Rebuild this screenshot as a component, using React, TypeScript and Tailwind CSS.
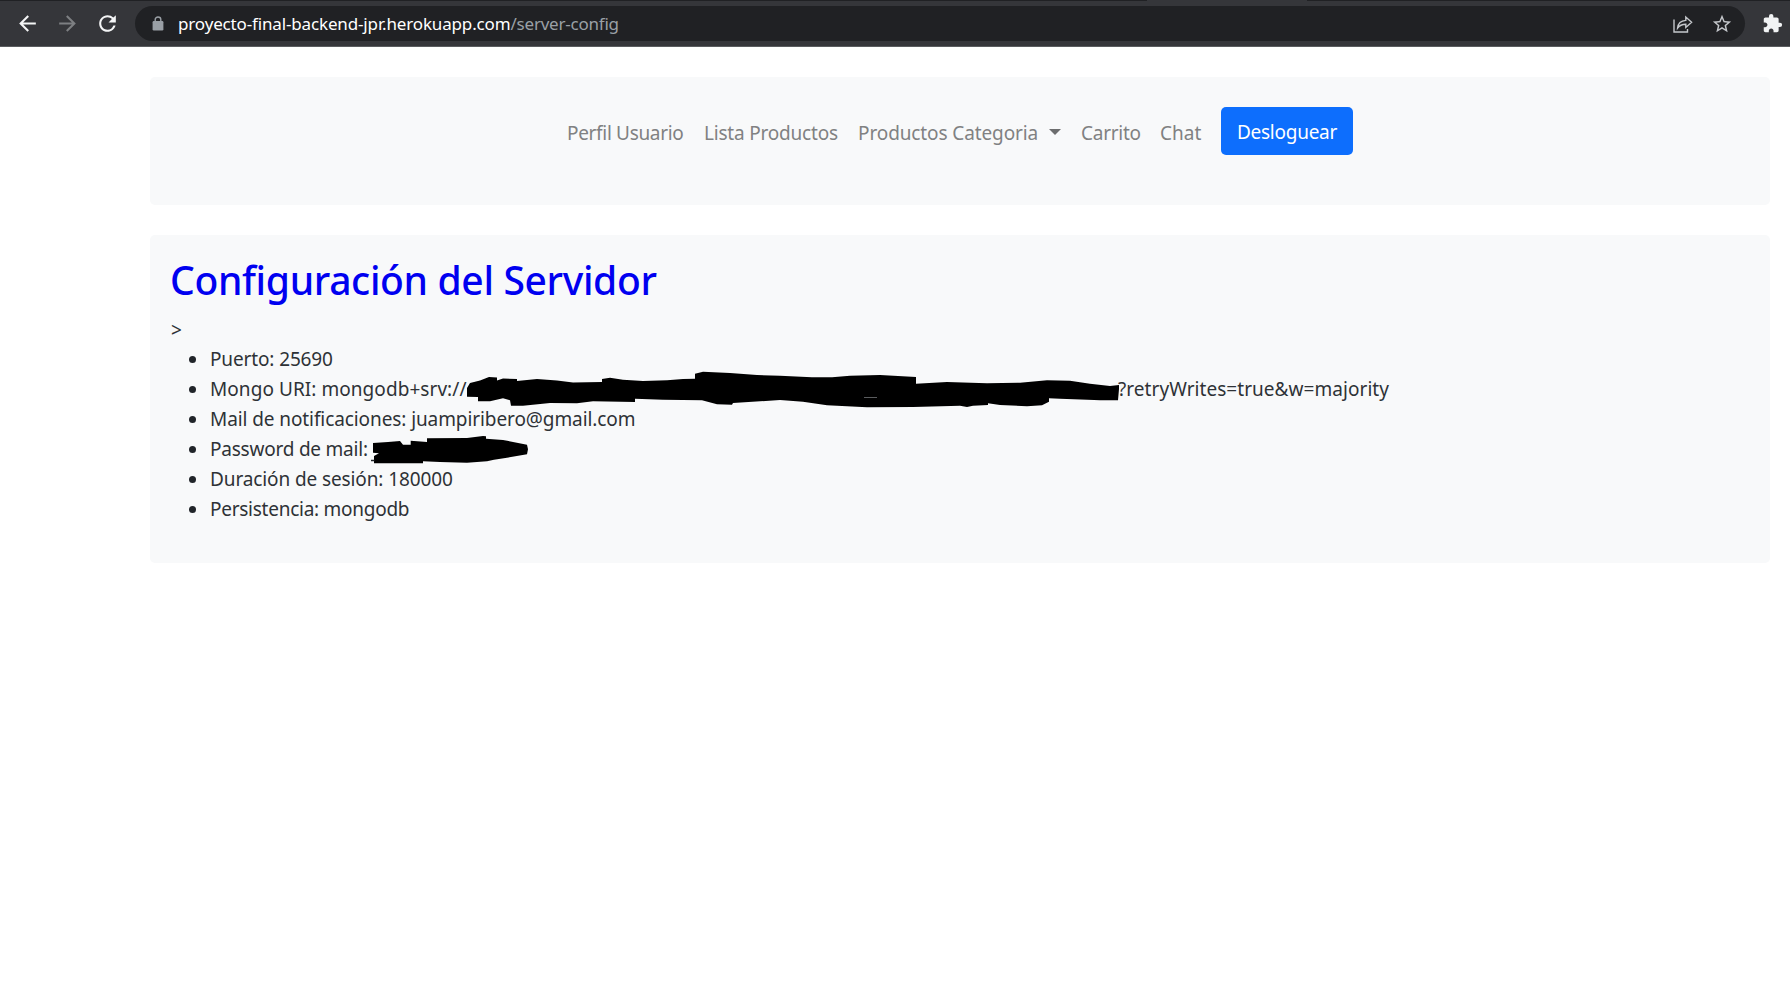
import React from "react";
import {
  MdArrowBack,
  MdArrowForward,
  MdRefresh,
  MdStarBorder,
  MdExtension,
} from "react-icons/md";

function LockIcon() {
  return (
    <svg width="12" height="15" viewBox="0 0 12 15" className="shrink-0">
      <path d="M3.2 6V3.6a2.8 2.6 0 0 1 5.6 0V6" fill="none" stroke="#9aa0a6" strokeWidth="1.4" />
      <rect x="0.6" y="5" width="10.8" height="9.5" rx="1.2" fill="#9aa0a6" />
    </svg>
  );
}

function ShareIcon() {
  return (
    <svg
      width="20"
      height="18"
      viewBox="0 0 20 18"
      fill="none"
      stroke="#c4c7cb"
      strokeWidth="1.4"
      className="shrink-0"
    >
      <path d="M1 4.5V17H14.5V14" />
      <path d="M4.6 13C5 8.8 7.6 5.8 12.8 5.4V2L18.6 7.2L12.8 12.4V9.2C9 9.2 6.4 10.4 4.6 13Z" />
    </svg>
  );
}

function BrowserBar() {
  return (
    <header className="flex h-[47px] flex-col border-b border-[#5a5c5f] bg-[#35363a]">
      <div className="flex h-px shrink-0 bg-[#202124] pl-[1147px]">
        <div className="w-[160px] bg-[#35363a]" />
      </div>
      <div className="flex flex-1 items-center pl-[15px]">
        <MdArrowBack size={25} className="shrink-0 text-[#f4f5f6]" />
        <MdArrowForward size={25} className="ml-[15px] shrink-0 text-[#7d7f82]" />
        <MdRefresh size={25} className="ml-[15px] shrink-0 text-[#f4f5f6]" />
        <div className="ml-[15px] flex h-[35px] w-[1610px] shrink-0 items-center rounded-full bg-[#202124] pr-[12px] pl-[17px]">
          <LockIcon />
          <p className="ml-[14px] flex-1 text-[17px] whitespace-nowrap">
            <span className="tracking-[-0.15px] text-white">proyecto-final-backend-jpr.herokuapp.com</span>
            <span className="tracking-[-0.22px] text-[#9aa0a6]">/server-config</span>
          </p>
          <ShareIcon />
          <MdStarBorder size={22} className="ml-[18px] shrink-0 text-[#c4c7cb]" />
        </div>
        <MdExtension size={21} className="ml-[17px] shrink-0 text-[#f1f3f4]" />
      </div>
    </header>
  );
}

function NavBar() {
  return (
    <nav className="flex h-[128px] items-start justify-center rounded-[5px] bg-[#f8f9fa] pt-[30px] text-[19px] text-[#808182]">
      <div className="flex h-[48px] items-center gap-5 leading-[30px] whitespace-nowrap">
        <a className="w-[117px] pt-[3px] tracking-[-0.32px]">Perfil Usuario</a>
        <a className="w-[134px] pt-[3px] tracking-[-0.2px]">Lista Productos</a>
        <a className="flex w-[203px] items-center justify-between pt-[3px] tracking-[-0.11px]">
          Productos Categoria
          <svg width="12" height="6" viewBox="0 0 12 6" className="-mt-[2px]">
            <path d="M0 0H12L6 6Z" fill="#6c6d6e" />
          </svg>
        </a>
        <a className="w-[59px] pt-[3px] tracking-[-0.25px]">Carrito</a>
        <a className="w-[41px] pt-[3px]">Chat</a>
        <button className="h-[48px] w-[132px] rounded-[5px] bg-[#0d6efd] pt-px tracking-[-0.25px] text-white">
          Desloguear
        </button>
      </div>
    </nav>
  );
}

function UriStroke() {
  return (
    <svg width="651" height="30" viewBox="467 373 651 30" className="shrink-0 overflow-visible">
      <path
        fill="#000"
        d="M467 387L470 382L480 379.5L489 376L497 376.5V379.5L503 377.5L517 378V380L537 378L557 379.5L573 381.5L602 381V378L610 376.7L623 378.7L643 380L667 379.3L683 378L695 377.7V372.7L703 370.7L730 372L757 374L780 374.7L812 376.3H832L850 374.7L880 374L916 376V382.7L947 381L987 382.3L1020 381.7L1047 379.3L1070 379.7L1090 382.7L1110 385L1119 384V388L1118 399.3H1100L1094 399L1060 397.7L1049 397.3V400.7L1042 404.3L1027 405.3L1000 404L988 402.3V404L973 404.7L967 406L960 404.7L913 406L867 406.3L827 404.3L803 400.7L780 399L733 402L732 403.7L717 403.3L702 399.3L663 398.7L635 397.7V401L593 400.3L577 402.3L550 402L523 404.7H511L510 399.3L503 397.3L490 400.3H478V396L467 395.7Z"
      />
      <path d="M864 396.5H877" stroke="#5a5c5e" strokeWidth="1" />
    </svg>
  );
}

function PasswordStroke() {
  return (
    <svg width="157" height="30" viewBox="371 433 157 30" className="shrink-0 overflow-visible">
      <path
        fill="#000"
        d="M373 442L388 441L400 440L403 443.7H410.7V439.7L427 441V437.3L467 437L483 435L486 435.3V437.7L503 439L527 443.7L528 448.3L527 453.3L507 456.7L494 458.7L487 460.3L467 461.7L440 461L423 460.3V462.3H374V455L379 452.3L373 451.7Z"
      />
      <path d="M371 459.5H374.5" stroke="#212529" strokeWidth="1.5" />
    </svg>
  );
}

function Item({ children }: { children: React.ReactNode }) {
  return (
    <li className="flex h-[30px] items-center">
      <span className="mr-[14px] ml-[19px] size-[7px] shrink-0 rounded-full bg-[#212529]" />
      {children}
    </li>
  );
}

function ServerConfig() {
  return (
    <section className="mt-[30px] h-[328px] rounded-[5px] bg-[#f8f9fa] px-5 pt-[21px] text-[19px] leading-[30px] whitespace-nowrap text-[#2e3236]">
      <h2 className="text-[39px] leading-[48px] font-medium tracking-[-0.34px] text-[#0000f0]">
        Configuración del Servidor
      </h2>
      <div className="mt-[10px] h-[30px] pt-px pl-px">&gt;</div>
      <ul>
        <Item>
          <span className="tracking-[-0.13px]">Puerto: 25690</span>
        </Item>
        <Item>
          <span className="w-[257px] tracking-[0.06px]">Mongo URI: mongodb+srv://</span>
          <UriStroke />
          <span className="tracking-[0.05px]">?retryWrites=true&amp;w=majority</span>
        </Item>
        <Item>
          <span className="tracking-[-0.09px]">Mail de notificaciones: juampiribero@gmail.com</span>
        </Item>
        <Item>
          <span className="w-[161px] tracking-[-0.22px]">Password de mail:</span>
          <PasswordStroke />
        </Item>
        <Item>
          <span className="tracking-[-0.11px]">Duración de sesión: 180000</span>
        </Item>
        <Item>
          <span className="tracking-[-0.26px]">Persistencia: mongodb</span>
        </Item>
      </ul>
    </section>
  );
}

export default function App() {
  return (
    <div className="min-h-screen overflow-hidden bg-white font-['Noto_Sans',sans-serif]">
      <BrowserBar />
      <main className="pt-[30px] pr-[20px] pl-[150px]">
        <NavBar />
        <ServerConfig />
      </main>
    </div>
  );
}
